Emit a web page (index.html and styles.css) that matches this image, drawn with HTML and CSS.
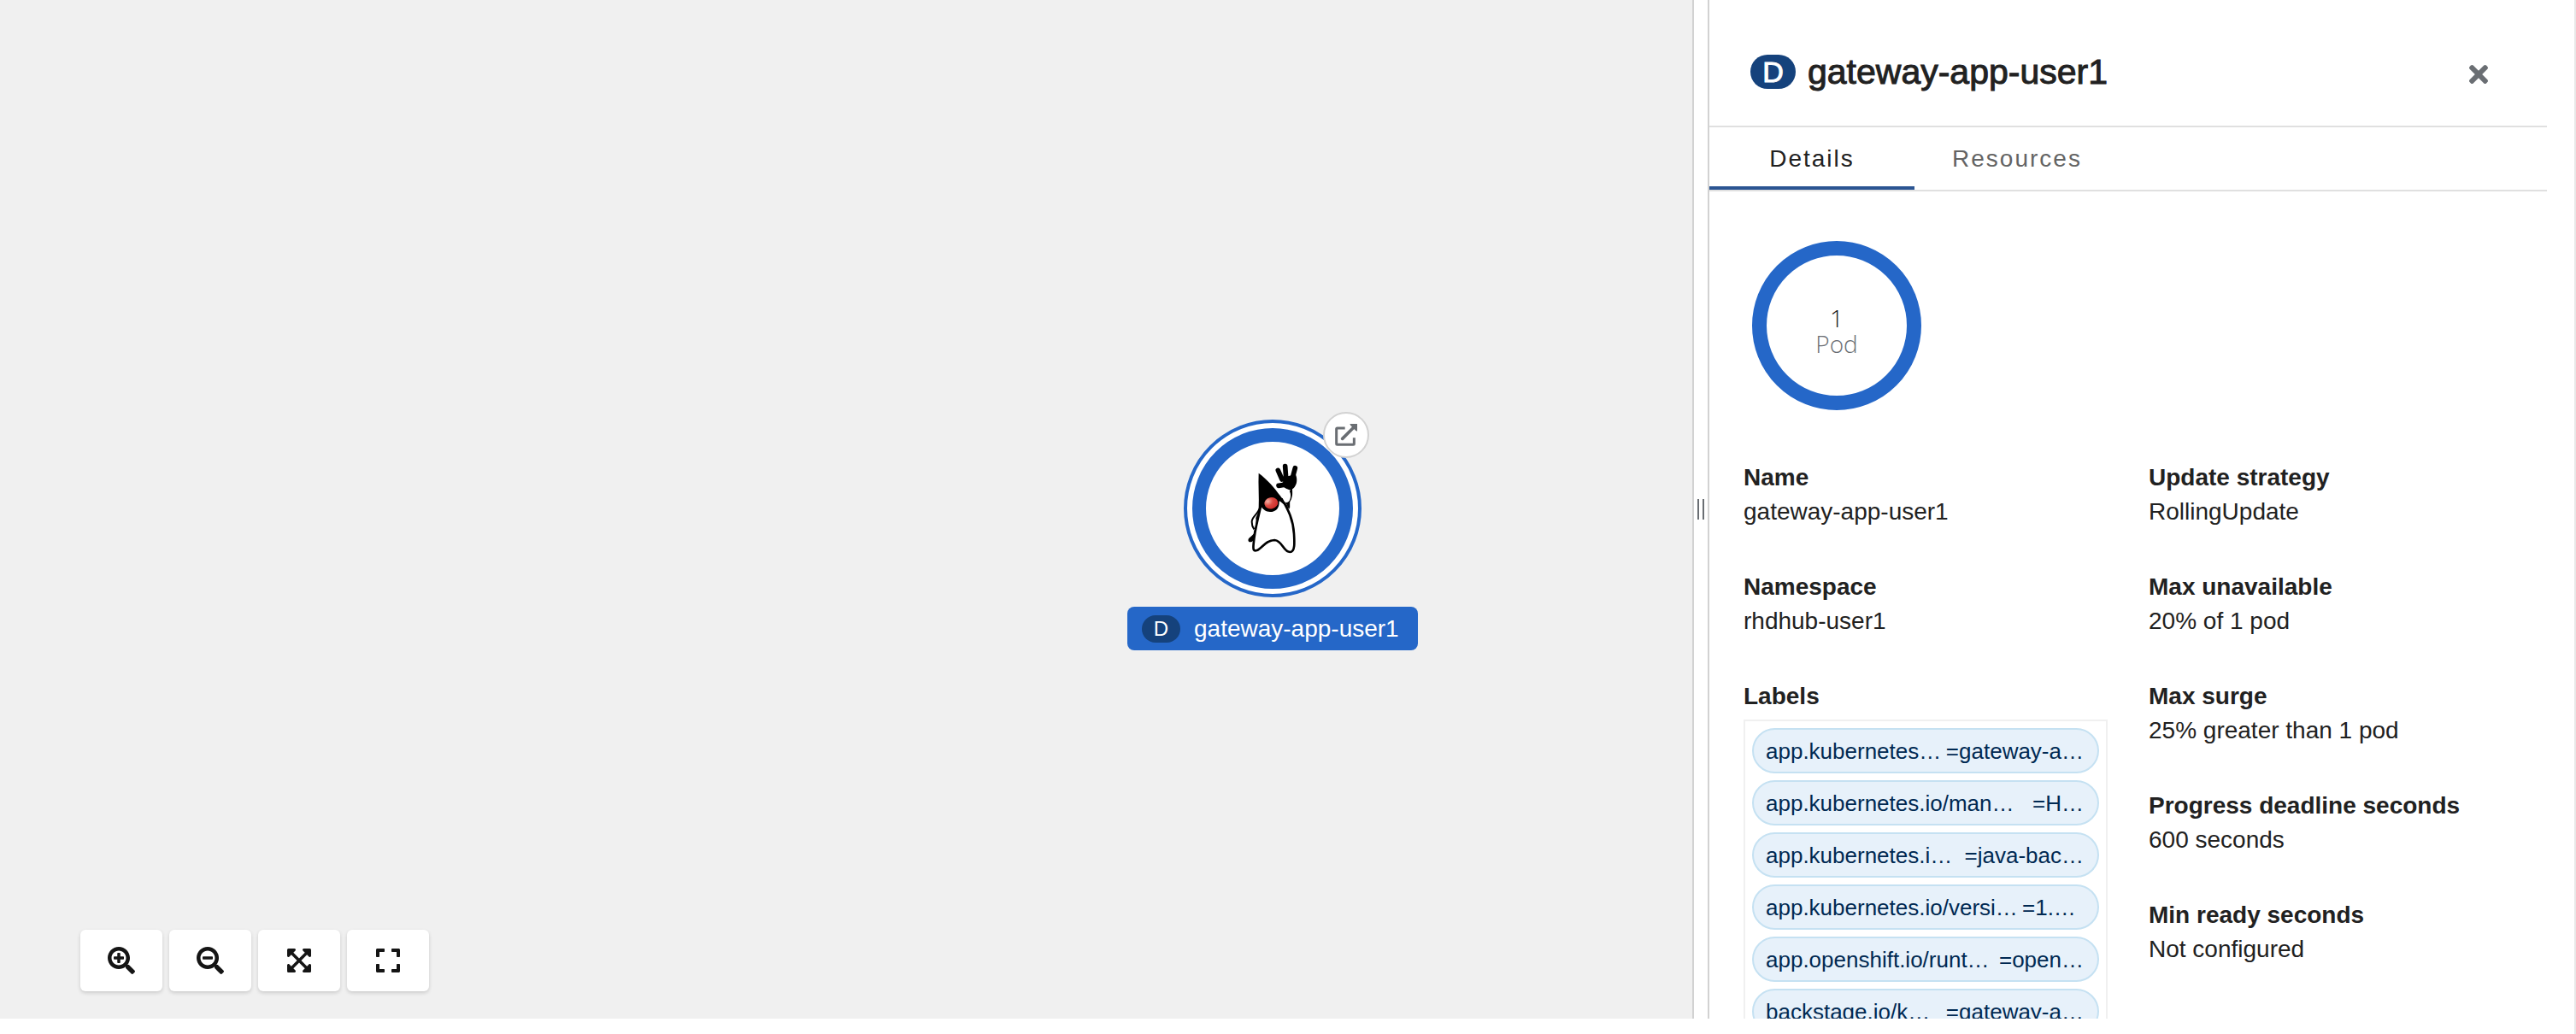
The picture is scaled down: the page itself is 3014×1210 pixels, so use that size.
FILE: index.html
```html
<!DOCTYPE html>
<html lang="en">
<head>
<meta charset="utf-8">
<title>Topology</title>
<link rel="stylesheet" href="styles.css">
</head>
<body>
<div class="topology">
  <main class="canvas">
    <div class="node">
      <svg class="node-shape" viewBox="0 0 208 208" aria-hidden="true">
        <defs>
          <radialGradient id="nose" cx="0.28" cy="0.3" r="0.75">
            <stop offset="0" stop-color="#f3b0a4"/>
            <stop offset="0.5" stop-color="#dc4a42"/>
            <stop offset="1" stop-color="#d02f2b"/>
          </radialGradient>
        </defs>
        <circle cx="104" cy="104" r="102" fill="#fff" stroke="#2567c8" stroke-width="4"/>
        <circle cx="104" cy="104" r="86" fill="#fff" stroke="#2567c8" stroke-width="16"/>
        <svg x="55" y="29" width="100" height="140" viewBox="0 0 300 420">
          <path d="M103 218C98 246 74 252 74 272c0 10 2 18 8 26" fill="none" stroke="#000" stroke-width="6"/>
          <path d="M100 215l-4 25-8 18c4 26-6 40-8 56-6 8-14 12-18 18-4 12 10 14 16 6l12-30 16-80z" fill="#000"/>
          <path d="M80 268c2-7 6-10 7-8 0 8-1 18-3 30-5-6-6-14-4-22z" fill="#fff"/>
          <path d="M105 218C94 270 84 300 80 350c-2 20 0 26 12 22 18-6 30-36 62-36 28 2 30 42 54 42 18 0 16-34 14-64-3-50-20-84-42-122z" fill="#fff" stroke="#000" stroke-width="8" stroke-linejoin="round"/>
          <path d="M98 101c30 22 56 52 76 80l34 48-38-32c2 28-12 40-32 40-14 0-24-8-30-17l-10 4c2-40-2-82 0-123z" fill="#000"/>
          <ellipse cx="142" cy="206" rx="24" ry="20" fill="url(#nose)" transform="rotate(-12 142 206)"/>
          <path d="M213 150c2 24 2 36-8 52l0 20-12-22" fill="#000" stroke="#000" stroke-width="5" stroke-linejoin="round"/>
          <path d="M170 166c6-8 16-10 26-8 14 4 16 18 13 32-3 12-12 18-20 12z" fill="#fff"/>
          <path d="M166 91l14 32M191 77l3 40M226 83l-10 38M168 145l26-4" fill="none" stroke="#000" stroke-width="17" stroke-linecap="round"/>
          <path d="M174 112c10 6 40-4 54-6 7 18 4 34-4 44-6 8-14 12-22 8-10-4-20-10-28-18l10-8z" fill="#000"/>
        </svg>
      </svg>
      <a class="node-link" href="#" aria-label="Open URL">
        <svg viewBox="0 0 78 78" width="26" height="26" fill="none" stroke="#6a6e73">
          <path d="M35 15H8q-3 0-3 3v52q0 3 3 3h56q3 0 3-3V49" stroke-width="9"/>
          <path d="M26 52L66 12" stroke-width="11" stroke-linecap="round"/>
          <path d="M52 0h26v26l-6-3L55 6z" fill="#6a6e73" stroke="none"/>
        </svg>
      </a>
      <div class="node-label"><span class="node-badge">D</span><span>gateway-app-user1</span></div>
    </div>
    <div class="controls">
      <button type="button" aria-label="Zoom in"><svg viewBox="0 0 512 512"><path d="M304 192v32c0 6.600-5.400 12-12 12h-56v56c0 6.600-5.400 12-12 12h-32c-6.600 0-12-5.400-12-12v-56h-56c-6.600 0-12-5.400-12-12v-32c0-6.600 5.400-12 12-12h56v-56c0-6.600 5.400-12 12-12h32c6.600 0 12 5.400 12 12v56h56c6.600 0 12 5.400 12 12zm201 284.700L476.700 505c-9.400 9.400-24.600 9.400-33.900 0L343 405.300c-4.500-4.500-7-10.600-7-17V372c-35.300 27.600-79.700 44-128 44C93.100 416 0 322.900 0 208S93.100 0 208 0s208 93.100 208 208c0 48.300-16.400 92.700-44 128h16.300c6.400 0 12.500 2.500 17 7l99.700 99.700c9.300 9.400 9.300 24.600 0 34zM344 208c0-75.200-60.800-136-136-136S72 132.800 72 208s60.800 136 136 136 136-60.800 136-136z"/></svg></button>
      <button type="button" aria-label="Zoom out"><svg viewBox="0 0 512 512"><path d="M304 192v32c0 6.600-5.400 12-12 12H124c-6.600 0-12-5.400-12-12v-32c0-6.600 5.400-12 12-12h168c6.600 0 12 5.400 12 12zm201 284.700L476.700 505c-9.400 9.400-24.600 9.400-33.900 0L343 405.300c-4.500-4.500-7-10.600-7-17V372c-35.300 27.600-79.700 44-128 44C93.100 416 0 322.900 0 208S93.100 0 208 0s208 93.100 208 208c0 48.300-16.400 92.700-44 128h16.300c6.400 0 12.500 2.500 17 7l99.700 99.700c9.300 9.400 9.300 24.600 0 34zM344 208c0-75.200-60.800-136-136-136S72 132.800 72 208s60.800 136 136 136 136-60.800 136-136z"/></svg></button>
      <button type="button" aria-label="Fit to screen"><svg viewBox="-32 0 512 512"><path d="M448 344v112a23.940 23.940 0 0 1-24 24H312c-21.390 0-32.090-25.900-17-41l36.200-36.200L224 295.600 116.770 402.900 153 439c15.090 15.100 4.390 41-17 41H24a23.940 23.940 0 0 1-24-24V344c0-21.400 25.890-32.100 41-17l36.190 36.200L184.460 256 77.180 148.700 41 185c-15.100 15.100-41 4.400-41-17V56a23.940 23.940 0 0 1 24-24h112c21.390 0 32.090 25.900 17 41l-36.200 36.200L224 216.400l107.230-107.300L295 73c-15.090-15.100-4.390-41 17-41h112a23.940 23.940 0 0 1 24 24v112c0 21.400-25.890 32.100-41 17l-36.190-36.200L263.540 256l107.280 107.300L407 327.100c15.100-15.200 41-4.500 41 16.900z"/></svg></button>
      <button type="button" aria-label="Reset view"><svg viewBox="-32 0 512 512"><path d="M0 180V56c0-13.300 10.700-24 24-24h124c6.600 0 12 5.400 12 12v40c0 6.600-5.400 12-12 12H64v84c0 6.600-5.400 12-12 12H12c-6.600 0-12-5.400-12-12zM288 44v40c0 6.600 5.400 12 12 12h84v84c0 6.600 5.400 12 12 12h40c6.600 0 12-5.400 12-12V56c0-13.300-10.700-24-24-24H300c-6.600 0-12 5.400-12 12zm148 276h-40c-6.600 0-12 5.400-12 12v84h-84c-6.600 0-12 5.400-12 12v40c0 6.600 5.400 12 12 12h124c13.300 0 24-10.700 24-24V332c0-6.600-5.400-12-12-12zM160 468v-40c0-6.600-5.400-12-12-12H64v-84c0-6.600-5.400-12-12-12H12c-6.600 0-12 5.400-12 12v124c0 13.300 10.700 24 24 24h124c6.600 0 12-5.400 12-12z"/></svg></button>
    </div>
  </main>
  <div class="splitter" role="separator" aria-orientation="vertical"><span class="splitter-handle"></span></div>
  <aside class="panel">
    <header class="panel-header">
      <span class="kind-badge">D</span>
      <h1>gateway-app-user1</h1>
      <button type="button" class="close" aria-label="Close"><svg viewBox="0 0 352 512" width="22" height="32"><path fill="#6a6e73" d="M242.720 256l100.070-100.070c12.280-12.280 12.280-32.190 0-44.480l-22.240-22.240c-12.280-12.280-32.190-12.280-44.480 0L176 189.280 75.930 89.210c-12.280-12.280-32.190-12.280-44.480 0L9.210 111.450c-12.280 12.280-12.280 32.190 0 44.480L109.280 256 9.210 356.070c-12.280 12.280-12.280 32.190 0 44.480l22.240 22.240c12.280 12.280 32.200 12.280 44.480 0L176 322.720l100.070 100.070c12.280 12.280 32.200 12.280 44.480 0l22.240-22.240c12.280-12.280 12.280-32.190 0-44.480L242.720 256z"/></svg></button>
    </header>
    <div class="tabs" role="tablist">
      <button type="button" role="tab" class="tab active" aria-selected="true">Details</button>
      <button type="button" role="tab" class="tab" aria-selected="false">Resources</button>
    </div>
    <div class="panel-body">
      <div class="donut"><span class="donut-count">1</span><span class="donut-unit">Pod</span></div>
      <div class="columns">
        <dl>
          <div class="field"><dt>Name</dt><dd>gateway-app-user1</dd></div>
          <div class="field"><dt>Namespace</dt><dd>rhdhub-user1</dd></div>
          <div class="field"><dt>Labels</dt>
            <dd>
              <ul class="labels">
                <li><span>app.kubernetes…</span><span>=gateway-a…</span></li>
                <li><span>app.kubernetes.io/man…</span><span>=H…</span></li>
                <li><span>app.kubernetes.i…</span><span>=java-bac…</span></li>
                <li><span>app.kubernetes.io/versi…</span><span class="short">=1.…</span></li>
                <li><span>app.openshift.io/runt…</span><span>=open…</span></li>
                <li><span>backstage.io/k…</span><span>=gateway-a…</span></li>
              </ul>
            </dd>
          </div>
        </dl>
        <dl>
          <div class="field"><dt>Update strategy</dt><dd>RollingUpdate</dd></div>
          <div class="field"><dt>Max unavailable</dt><dd>20% of 1 pod</dd></div>
          <div class="field"><dt>Max surge</dt><dd>25% greater than 1 pod</dd></div>
          <div class="field"><dt>Progress deadline seconds</dt><dd>600 seconds</dd></div>
          <div class="field"><dt>Min ready seconds</dt><dd>Not configured</dd></div>
        </dl>
      </div>
    </div>
  </aside>
</div>
</body>
</html>
```
FILE: styles.css
```css
* {
  box-sizing: border-box;
}

body {
  margin: 0;
  height: 100vh;
  padding-bottom: 18px;
  border-right: 2px solid #e8e8e8;
  overflow: hidden;
  background: #fff;
  color: #212121;
  font: 28px/40px "Liberation Sans", Arial, sans-serif;
  font-kerning: none;
}

button {
  padding: 0;
  border: 0;
  background: none;
  font: inherit;
  color: inherit;
}

h1, dl, dd, ul {
  margin: 0;
  padding: 0;
}

.topology {
  display: flex;
  height: 100%;
}

/* Graph canvas */
.canvas {
  position: relative;
  flex: 1;
  display: flex;
  align-items: flex-end;
  padding: 32px 94px;
  background: #f0f0f0;
}

.node {
  position: absolute;
  left: 1319px;
  top: 491px;
  width: 340px;
  display: flex;
  flex-direction: column;
  align-items: center;
  gap: 11px;
}

.node-shape {
  width: 208px;
  height: 208px;
}

.node-link {
  position: absolute;
  left: 229px;
  top: -9px;
  width: 54px;
  height: 54px;
  display: grid;
  place-items: center;
  border: 2px solid #d2d2d2;
  border-radius: 50%;
  background: #fff;
}

.node-label {
  display: flex;
  align-items: center;
  gap: 16px;
  width: 100%;
  height: 51px;
  padding-left: 17px;
  border-radius: 8px;
  background: #2567c8;
  color: #fff;
}

.node-badge {
  width: 45px;
  border-radius: 16px;
  background: #15427c;
  font-size: 24px;
  line-height: 32px;
  text-align: center;
}

.controls {
  display: flex;
  gap: 8px;
}

.controls button {
  display: grid;
  place-items: center;
  width: 96px;
  height: 72px;
  border-radius: 6px;
  background: #fff;
  box-shadow: 0 2px 4px rgba(3, 3, 3, 0.16);
}

.controls svg {
  width: 32px;
  height: 32px;
  fill: #151515;
}

/* Drag handle between canvas and panel */
.splitter {
  display: grid;
  place-items: center;
  width: 20px;
  border: solid #d2d2d2;
  border-width: 0 2px;
}

.splitter-handle {
  width: 8px;
  height: 24px;
  border: solid #6a6e73;
  border-width: 0 2px;
}

/* Side panel */
.panel {
  width: 1012px;
  padding-right: 32px;
  overflow: hidden;
}

.panel-header {
  display: flex;
  align-items: center;
  height: 149px;
  padding: 32px 69px 5px 48px;
  border-bottom: 2px solid #e0e0e0;
}

.kind-badge {
  width: 53px;
  margin-right: 14px;
  margin-bottom: 6px;
  border-radius: 20px;
  background: #15427c;
  color: #fff;
  font-size: 34px;
  line-height: 40px;
  text-align: center;
  -webkit-text-stroke: 1px currentColor;
}

.panel-header h1 {
  flex: 1;
  margin-bottom: 6px;
  font-size: 41px;
  font-weight: 400;
  line-height: 48px;
  -webkit-text-stroke: 1px currentColor;
}

.close {
  display: flex;
}

.tabs {
  display: flex;
  border-bottom: 2px solid #e0e0e0;
}

.tab {
  width: 240px;
  height: 73px;
  padding-top: 4px;
  border-bottom: 4px solid transparent;
  color: #646464;
  letter-spacing: 2px;
}

.tab.active {
  border-color: #2b5592;
  color: #212121;
}

.panel-body {
  padding: 58px 40px 0;
}

.donut {
  display: flex;
  flex-direction: column;
  align-items: center;
  justify-content: center;
  width: 198px;
  height: 198px;
  margin: 0 0 59px 10px;
  padding-top: 12px;
  border: 17px solid #2567c8;
  border-radius: 50%;
  font-family: "Open Sans", "Noto Sans", sans-serif;
  font-weight: 300;
  line-height: 30px;
}

.donut-count {
  color: #151515;
}

.donut-unit {
  color: #6a6e73;
}

.columns {
  display: grid;
  grid-template-columns: 1fr 1fr;
  gap: 48px;
}

.field {
  margin-bottom: 48px;
}

dt {
  font-weight: 700;
}

.labels {
  display: grid;
  gap: 8px;
  margin-top: 7px;
  padding: 8px;
  border: 2px solid #f0f0f0;
  list-style: none;
}

.labels li {
  display: flex;
  justify-content: space-between;
  height: 53px;
  padding: 0 16px 0 14px;
  border: 2px solid #c5e1f2;
  border-radius: 27px;
  background: #e7f1fa;
  color: #002952;
  font-size: 26px;
  line-height: 50px;
  white-space: nowrap;
}

.short {
  min-width: 72px;
}
```
